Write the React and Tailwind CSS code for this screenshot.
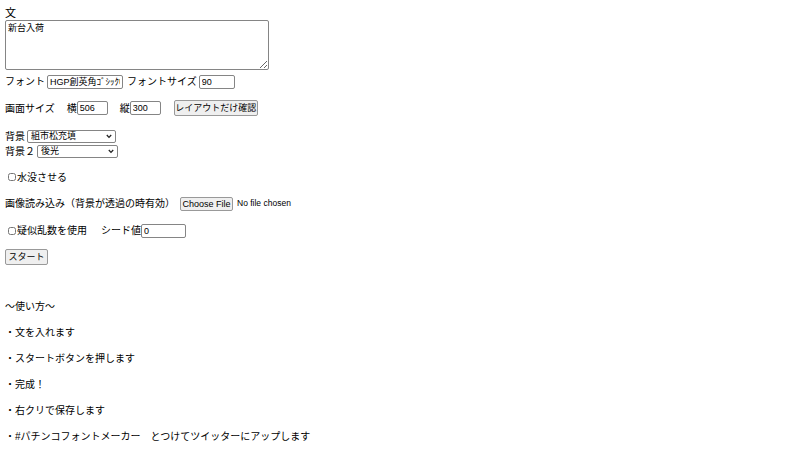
const font = { fontFamily: '"Liberation Sans", "Noto Sans CJK JP", sans-serif' };

const inputCls =
  "h-[14px] border border-[#858585] rounded-[2px] bg-white px-[2px] text-[9px] leading-[12px] text-black outline-none";
const btnCls =
  "flex items-center justify-center whitespace-nowrap border border-[#999999] rounded-[2px] bg-[#efefef] text-[9px] leading-[12px] text-black px-0";

const howTo = [
  "・文を入れます",
  "・スタートボタンを押します",
  "・完成！",
  "・右クリで保存します",
  "・#パチンコフォントメーカー　とつけてツイッターにアップします",
];

function Select({ width, value }) {
  return (
    <span className={`relative ml-[2px] inline-flex ${width}`}>
      <select
        className="w-full h-[13px] appearance-none border border-[#858585] rounded-[2px] bg-white pl-[3px] pr-[12px] py-0 text-[9px] leading-[11px] text-black outline-none"
        style={font}
        defaultValue={value}
      >
        <option value={value}>{value}</option>
      </select>
      <svg
        className="pointer-events-none absolute right-[4px] top-[4px]"
        width="6"
        height="5"
        viewBox="0 0 6 5"
      >
        <path d="M0.8 1 L3 3.4 L5.2 1" fill="none" stroke="#222" strokeWidth="1.3" />
      </svg>
    </span>
  );
}

export default function App() {
  return (
    <div className="min-h-screen bg-white text-[10px] text-black pl-[5px] pt-[6px]" style={font}>
      <div className="h-[14px] flex items-center text-[11px]">文</div>
      <textarea
        className="block w-[264px] h-[50px] border border-[#858585] rounded-[2px] px-[2px] py-[1px] text-[9px] leading-[12px] resize"
        defaultValue="新台入荷"
        style={font}
      />

      <div className="mt-[4px] h-[15px] flex items-center">
        <span>フォント</span>
        <input className={`${inputCls} ml-[2px] w-[76px]`} defaultValue="HGP創英角ｺﾞｼｯｸUB" style={font} />
        <span className="ml-[4px]">フォントサイズ</span>
        <input className={`${inputCls} ml-[2px] w-[36px]`} defaultValue="90" style={font} />
      </div>

      <div className="mt-[11px] h-[16px] flex items-center">
        <span>画面サイズ</span>
        <span className="ml-[12px]">横</span>
        <input className={`${inputCls} w-[31px]`} defaultValue="506" style={font} />
        <span className="ml-[12px]">縦</span>
        <input className={`${inputCls} w-[31px]`} defaultValue="300" style={font} />
        <button className={`${btnCls} ml-[13px] h-[16px] w-[84px]`} style={font}>
          レイアウトだけ確認
        </button>
      </div>

      <div className="mt-[13px] h-[14px] flex items-center">
        <span>背景</span>
        <Select width="w-[89px]" value="組市松充填" />
      </div>
      <div className="mt-[1px] h-[14px] flex items-center">
        <span>背景２</span>
        <Select width="w-[81px]" value="後光" />
      </div>

      <div className="mt-[12px] h-[14px] flex items-center">
        <input type="checkbox" className="ml-[3px] mr-[1px] w-[8px] h-[8px]" />
        <span>水没させる</span>
      </div>

      <div className="mt-[12px] h-[15px] flex items-center">
        <span>画像読み込み（背景が透過の時有効）</span>
        <button className={`${btnCls} ml-[5px] h-[14px] w-[53px]`} style={font}>
          Choose File
        </button>
        <span className="ml-[4px] text-[8.5px] whitespace-nowrap">No file chosen</span>
      </div>

      <div className="mt-[12px] h-[15px] flex items-center">
        <input type="checkbox" className="ml-[3px] mr-[1px] w-[8px] h-[8px]" />
        <span>疑似乱数を使用</span>
        <span className="ml-[14px]">シード値</span>
        <input className={`${inputCls} w-[45px]`} defaultValue="0" style={font} />
      </div>

      <div className="mt-[10px] h-[17px] flex items-center">
        <button className={`${btnCls} h-[16px] w-[43px]`} style={font}>
          スタート
        </button>
      </div>

      <div className="mt-[34px] h-[14px] flex items-center">〜使い方〜</div>
      {howTo.map((t) => (
        <div key={t} className="mt-[12px] h-[14px] flex items-center">
          {t}
        </div>
      ))}
    </div>
  );
}
